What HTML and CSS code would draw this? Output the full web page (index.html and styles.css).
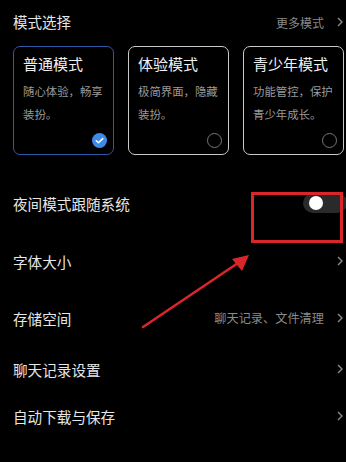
FILE: index.html
```html
<!DOCTYPE html>
<html lang="zh-CN">
<head>
    <meta charset="UTF-8">
    <meta name="viewport" content="width=device-width, initial-scale=1.0">
    <title>通用设置</title>
    <link rel="stylesheet" href="styles.css">
</head>
<body>
    <div class="page">
        <div class="section-head">
            <span class="section-title">模式选择</span>
            <span class="more">更多模式
                <svg class="chev" width="6" height="10" viewBox="0 0 6 10"><path d="M1 1l4 4-4 4" fill="none" stroke="#8a8a8a" stroke-width="1.4"/></svg>
            </span>
        </div>

        <div class="modes">
            <div class="mode active">
                <div class="mode-name">普通模式</div>
                <div class="mode-desc">随心体验，畅享装扮。</div>
                <span class="radio checked">
                    <svg width="15" height="15" viewBox="0 0 15 15"><circle cx="7.5" cy="7.5" r="7.5" fill="#3d8be6"/><path d="M4.3 7.7l2.2 2.1 4.2-4.2" fill="none" stroke="#fff" stroke-width="1.5" stroke-linecap="round" stroke-linejoin="round"/></svg>
                </span>
            </div>
            <div class="mode">
                <div class="mode-name">体验模式</div>
                <div class="mode-desc">极简界面，隐藏装扮。</div>
                <span class="radio"></span>
            </div>
            <div class="mode">
                <div class="mode-name">青少年模式</div>
                <div class="mode-desc">功能管控，保护青少年成长。</div>
                <span class="radio"></span>
            </div>
        </div>

        <div class="rows">
            <div class="row">
                <span class="row-label">夜间模式跟随系统</span>
                <span class="toggle"><span class="knob"></span></span>
            </div>
            <div class="row">
                <span class="row-label">字体大小</span>
                <svg class="chev" width="6" height="10" viewBox="0 0 6 10"><path d="M1 1l4 4-4 4" fill="none" stroke="#8a8a8a" stroke-width="1.4"/></svg>
            </div>
            <div class="row storage">
                <span class="row-label">存储空间</span>
                <span class="row-value">聊天记录、文件清理
                    <svg class="chev" width="6" height="10" viewBox="0 0 6 10"><path d="M1 1l4 4-4 4" fill="none" stroke="#8a8a8a" stroke-width="1.4"/></svg>
                </span>
            </div>
            <div class="row history">
                <span class="row-label">聊天记录设置</span>
                <svg class="chev" width="6" height="10" viewBox="0 0 6 10"><path d="M1 1l4 4-4 4" fill="none" stroke="#8a8a8a" stroke-width="1.4"/></svg>
            </div>
            <div class="row short">
                <span class="row-label">自动下载与保存</span>
                <svg class="chev" width="6" height="10" viewBox="0 0 6 10"><path d="M1 1l4 4-4 4" fill="none" stroke="#8a8a8a" stroke-width="1.4"/></svg>
            </div>
        </div>

        <!-- red annotation drawn over the screenshot -->
        <svg class="markup" width="346" height="462" viewBox="0 0 346 462">
            <rect x="252.5" y="193.5" width="89" height="48" fill="none" stroke="#d8262a" stroke-width="3"/>
            <line x1="143" y1="327" x2="238" y2="263" stroke="#d8262a" stroke-width="2.6" stroke-linecap="round"/>
            <polygon points="249,255 232,259 242,271" fill="#d8262a"/>
        </svg>
    </div>
</body>
</html>
```

FILE: styles.css
```css
html, body { margin: 0; background: #000; }
body { font-family: "Noto Sans CJK SC", "Noto Sans", sans-serif; color: #e6e6e6; overflow: hidden; }
.page { position: relative; width: 346px; height: 462px; }

.section-head { display: flex; justify-content: space-between; align-items: center; padding: 12px 3px 0 13px; height: 20px; }
.section-title { font-size: 14.5px; line-height: 20px; }
.more { display: flex; align-items: center; gap: 13px; font-size: 12px; color: #8a8a8a; }
.chev { display: block; flex: none; }

.modes { display: grid; grid-template-columns: 101px 101px 101px; gap: 14px; padding: 14px 3px 0 13px; }
.mode { display: flex; flex-direction: column; box-sizing: border-box; height: 109px; padding: 7px 6px 6px 9px; border: 1.5px solid #c9c9c9; border-radius: 7px; }
.mode.active { border-color: #2d5ba8; }
.mode-name { font-size: 15px; line-height: 20px; color: #f0f0f0; white-space: nowrap; }
.mode-desc { margin-top: 6px; font-size: 11.4px; line-height: 23px; color: #9a9a9a; }
.radio { margin-top: auto; align-self: flex-end; box-sizing: border-box; width: 15px; height: 15px; border: 1px solid #777; border-radius: 50%; }
.radio.checked { border: none; }
.radio svg { display: block; }

.rows { margin-top: 19px; }
.row { display: flex; justify-content: space-between; align-items: center; height: 58px; padding: 0 3px 0 13px; }
.row.storage { height: 56px; }
.row.history { height: 46px; }
.row.short { height: 48px; }
.row-label { font-size: 14.6px; }
.row-value { display: flex; align-items: center; gap: 13px; font-size: 12.2px; color: #8a8a8a; }

.toggle { position: relative; width: 44px; height: 20px; margin-right: -4px; border-radius: 10px; background: #2a2a2a; }
.knob { position: absolute; left: 6px; top: 3px; width: 14px; height: 14px; border-radius: 50%; background: #fff; }

.markup { position: absolute; left: 0; top: 0; pointer-events: none; }
```
